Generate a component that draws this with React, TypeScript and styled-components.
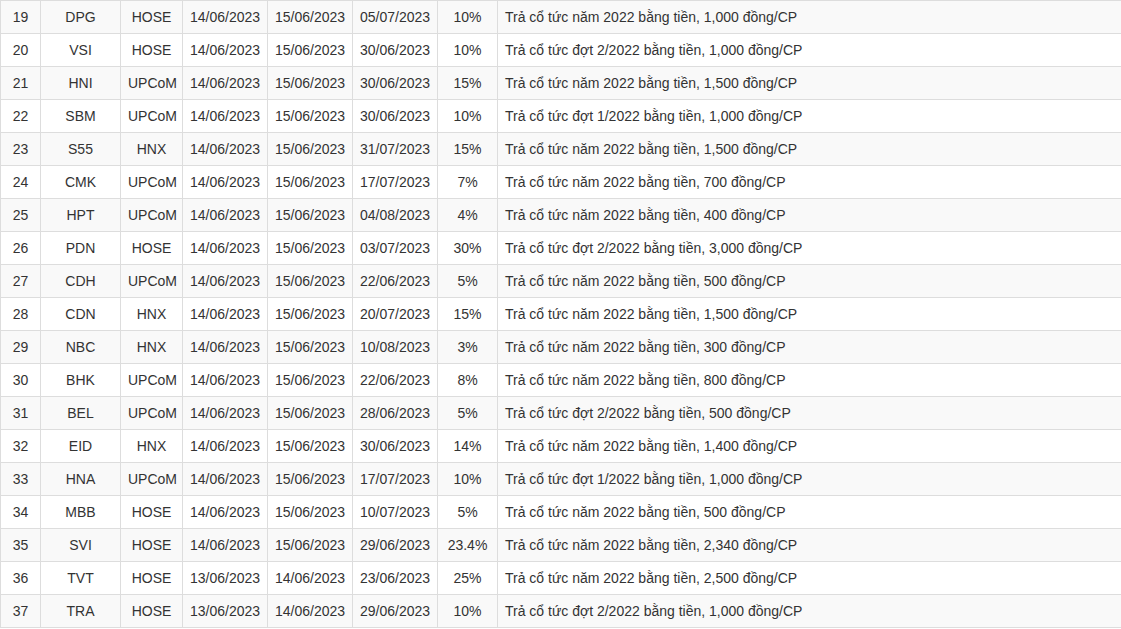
import React from "react";
import styled, { createGlobalStyle } from "styled-components";

const Global = createGlobalStyle`
  html, body { margin: 0; padding: 0; background: #fff; overflow: hidden; }
  body { font-family: "Liberation Sans", Arial, sans-serif; font-size: 14px; color: #333; }
`;

const Wrap = styled.div`
  width: 1140px;
`;

const Table = styled.table`
  width: 100%;
  border-collapse: collapse;
  table-layout: fixed;
  border-spacing: 0;
`;

const Row = styled.tr<{ $odd: boolean }>`
  background: ${(p) => (p.$odd ? "#f9f9f9" : "#fff")};
`;

const Cell = styled.td<{ $left?: boolean }>`
  border: 1px solid #ddd;
  padding: 6px 7px;
  line-height: 20px;
  height: 20px;
  text-align: ${(p) => (p.$left ? "left" : "center")};
  white-space: nowrap;
  overflow: hidden;
`;

type R = [number, string, string, string, string, string, string, string];

const rows: R[] = [
  [19, "DPG", "HOSE", "14/06/2023", "15/06/2023", "05/07/2023", "10%", "Trả cổ tức năm 2022 bằng tiền, 1,000 đồng/CP"],
  [20, "VSI", "HOSE", "14/06/2023", "15/06/2023", "30/06/2023", "10%", "Trả cổ tức đợt 2/2022 bằng tiền, 1,000 đồng/CP"],
  [21, "HNI", "UPCoM", "14/06/2023", "15/06/2023", "30/06/2023", "15%", "Trả cổ tức năm 2022 bằng tiền, 1,500 đồng/CP"],
  [22, "SBM", "UPCoM", "14/06/2023", "15/06/2023", "30/06/2023", "10%", "Trả cổ tức đợt 1/2022 bằng tiền, 1,000 đồng/CP"],
  [23, "S55", "HNX", "14/06/2023", "15/06/2023", "31/07/2023", "15%", "Trả cổ tức năm 2022 bằng tiền, 1,500 đồng/CP"],
  [24, "CMK", "UPCoM", "14/06/2023", "15/06/2023", "17/07/2023", "7%", "Trả cổ tức năm 2022 bằng tiền, 700 đồng/CP"],
  [25, "HPT", "UPCoM", "14/06/2023", "15/06/2023", "04/08/2023", "4%", "Trả cổ tức năm 2022 bằng tiền, 400 đồng/CP"],
  [26, "PDN", "HOSE", "14/06/2023", "15/06/2023", "03/07/2023", "30%", "Trả cổ tức đợt 2/2022 bằng tiền, 3,000 đồng/CP"],
  [27, "CDH", "UPCoM", "14/06/2023", "15/06/2023", "22/06/2023", "5%", "Trả cổ tức năm 2022 bằng tiền, 500 đồng/CP"],
  [28, "CDN", "HNX", "14/06/2023", "15/06/2023", "20/07/2023", "15%", "Trả cổ tức năm 2022 bằng tiền, 1,500 đồng/CP"],
  [29, "NBC", "HNX", "14/06/2023", "15/06/2023", "10/08/2023", "3%", "Trả cổ tức năm 2022 bằng tiền, 300 đồng/CP"],
  [30, "BHK", "UPCoM", "14/06/2023", "15/06/2023", "22/06/2023", "8%", "Trả cổ tức năm 2022 bằng tiền, 800 đồng/CP"],
  [31, "BEL", "UPCoM", "14/06/2023", "15/06/2023", "28/06/2023", "5%", "Trả cổ tức đợt 2/2022 bằng tiền, 500 đồng/CP"],
  [32, "EID", "HNX", "14/06/2023", "15/06/2023", "30/06/2023", "14%", "Trả cổ tức năm 2022 bằng tiền, 1,400 đồng/CP"],
  [33, "HNA", "UPCoM", "14/06/2023", "15/06/2023", "17/07/2023", "10%", "Trả cổ tức đợt 1/2022 bằng tiền, 1,000 đồng/CP"],
  [34, "MBB", "HOSE", "14/06/2023", "15/06/2023", "10/07/2023", "5%", "Trả cổ tức năm 2022 bằng tiền, 500 đồng/CP"],
  [35, "SVI", "HOSE", "14/06/2023", "15/06/2023", "29/06/2023", "23.4%", "Trả cổ tức năm 2022 bằng tiền, 2,340 đồng/CP"],
  [36, "TVT", "HOSE", "13/06/2023", "14/06/2023", "23/06/2023", "25%", "Trả cổ tức năm 2022 bằng tiền, 2,500 đồng/CP"],
  [37, "TRA", "HOSE", "13/06/2023", "14/06/2023", "29/06/2023", "10%", "Trả cổ tức đợt 2/2022 bằng tiền, 1,000 đồng/CP"],
];

const widths = [40, 80, 62, 85, 85, 85, 60];

export default function App() {
  return (
    <Wrap>
      <Global />
      <Table>
        <colgroup>
          {widths.map((w, i) => (
            <col key={i} style={{ width: w }} />
          ))}
          <col />
        </colgroup>
        <tbody>
          {rows.map((r, i) => (
            <Row key={r[0]} $odd={i % 2 === 0}>
              {r.slice(0, 7).map((c, j) => (
                <Cell key={j}>{c}</Cell>
              ))}
              <Cell $left>{r[7]}</Cell>
            </Row>
          ))}
        </tbody>
      </Table>
    </Wrap>
  );
}
